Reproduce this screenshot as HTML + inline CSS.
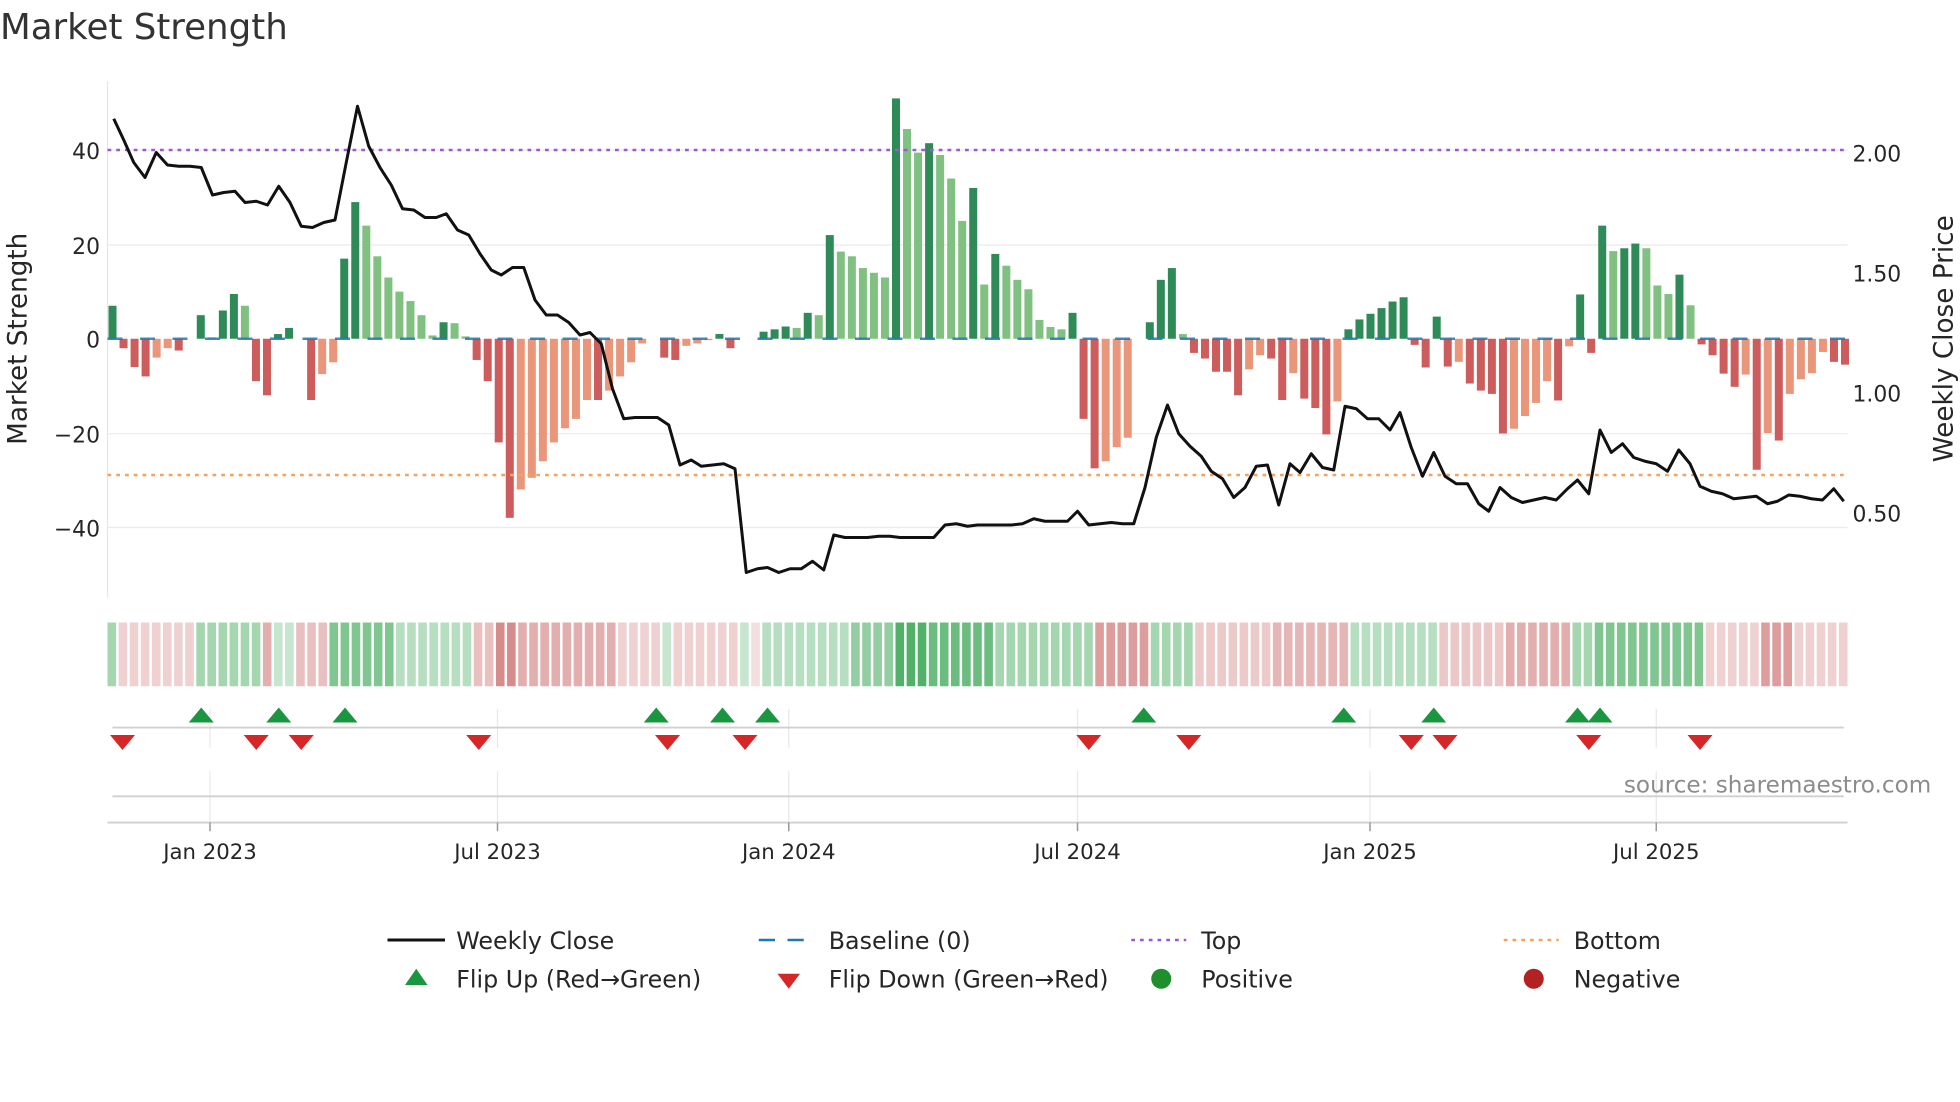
<!DOCTYPE html>
<html><head><meta charset="utf-8">
<style>
html,body{margin:0;padding:0;background:#fff;}
svg{display:block;}
text{font-family:"DejaVu Sans","Liberation Sans",sans-serif;}
</style></head>
<body>
<svg id="s" width="1960" height="1102" viewBox="0 0 1568 881.6" xmlns="http://www.w3.org/2000/svg" fill="#262626">
<rect width="1568" height="882" fill="#fff"/>
<text x="0" y="31" font-size="28.5" style="fill:#333">Market Strength</text>
<g stroke="#ebebeb" stroke-width="1">
<line x1="86" x2="1478" y1="120" y2="120"/><line x1="86" x2="1478" y1="196" y2="196"/>
<line x1="86" x2="1478" y1="347" y2="347"/><line x1="86" x2="1478" y1="422" y2="422"/>
</g>
<line x1="86" x2="86" y1="65" y2="478" stroke="#e6e6e6"/>
<g font-size="17.5" text-anchor="end">
<text x="80" y="127">40</text><text x="80" y="203">20</text><text x="80" y="278">0</text>
<text x="80" y="354">−20</text><text x="80" y="429">−40</text>
</g>
<g font-size="17.5">
<text x="1482" y="129">2.00</text><text x="1482" y="225">1.50</text>
<text x="1482" y="321">1.00</text><text x="1482" y="417">0.50</text>
</g>
<text transform="translate(21,271) rotate(-90)" font-size="21" text-anchor="middle">Market Strength</text>
<text transform="translate(1562,271) rotate(-90)" font-size="21" text-anchor="middle">Weekly Close Price</text>
<g id="bars"></g>
<line x1="86" x2="1478" y1="271" y2="271" stroke="#1f77b4" stroke-width="2" stroke-dasharray="12,14" opacity="0.85"/>
<line x1="86" x2="1478" y1="120" y2="120" stroke="#9b59d6" stroke-width="2" stroke-dasharray="3,4"/>
<line x1="86" x2="1478" y1="380" y2="380" stroke="#f4a261" stroke-width="2" stroke-dasharray="3,4"/>
<polyline id="price" fill="none" stroke="#111" stroke-width="2.4" stroke-linejoin="round"/>
<g id="strip"></g>
<g stroke="#e8e8e8" stroke-width="1" id="vg"></g>
<line x1="90" x2="1475" y1="582" y2="582" stroke="#d0d0d0" stroke-width="1.5"/>
<g id="mk"></g>
<line x1="90" x2="1475" y1="637" y2="637" stroke="#d0d0d0" stroke-width="1.5"/>
<text x="1545" y="634" font-size="18.5" text-anchor="end" style="fill:#8c8c8c">source: sharemaestro.com</text>
<line x1="86" x2="1478" y1="658" y2="658" stroke="#cfcfcf" stroke-width="1.5"/>
<g id="ticks" font-size="17" text-anchor="middle"></g>
<g font-size="19">
<line x1="310" x2="356" y1="752" y2="752" stroke="#111" stroke-width="2.4"/>
<text x="365" y="759">Weekly Close</text>
<line x1="607" x2="651" y1="752" y2="752" stroke="#1f77b4" stroke-width="2" stroke-dasharray="13,10"/>
<text x="663" y="759">Baseline (0)</text>
<line x1="905" x2="949" y1="752" y2="752" stroke="#9b59d6" stroke-width="2" stroke-dasharray="3,4"/>
<text x="961" y="759">Top</text>
<line x1="1203" x2="1247" y1="752" y2="752" stroke="#f4a261" stroke-width="2" stroke-dasharray="3,4"/>
<text x="1259" y="759">Bottom</text>
<polygon points="324,788 342,788 333,775" fill="#1a9641"/>
<text x="365" y="790">Flip Up (Red→Green)</text>
<polygon points="622,779 640,779 631,791" fill="#d62728"/>
<text x="663" y="790">Flip Down (Green→Red)</text>
<circle cx="929" cy="783" r="8" fill="#1f8f2e"/>
<text x="961" y="790">Positive</text>
<circle cx="1227" cy="783" r="8" fill="#b22222"/>
<text x="1259" y="790">Negative</text>
</g>
</svg>
<script>
var NS="http://www.w3.org/2000/svg";
function el(p,t,a){var e=document.createElementNS(NS,t);for(var k in a)e.setAttribute(k,a[k]);p.appendChild(e);return e;}
var A="7d -2d -6d -8d -4l -2l -2.5d 0d 5d 0.3l 6d 9.5d 7l -9d -12d 1d 2.3d 0d -13d -7.5l -5l 17d 29d 24l 17.5l 13l 10l 8l 5l 0.7l 3.5d 3.3l 0.5l -4.5d -9d -22d -38d -32l -29.5l -26l -22l -19l -17l -13l -13d -11l -8l -5l -1l 0d -4d -4.5d -1.5l -1l -0.3l 1d -2d 0d 0d 1.5d 2d 2.6d 2.3l 5.5d 5l 22d 18.5l 17.5l 15l 14l 13l 51d 44.5l 39.5l 41.5d 39l 34l 25l 32d 11.5l 18d 15.5l 12.5l 10.5l 4l 2.5l 2l 5.5d -17d -27.5d -26l -23l -21l 0d 3.5d 12.5d 15d 1l";
var B="-3d -4.2d -7d -7d -12d -6.5l -3.5l -4.2d -13d -7.3l -12.7d -14.7d -20.3d -13.3l 2d 4.1d 5.3d 6.5d 7.9d 8.8d -1.3d -6.1d 4.7d -5.9d -4.9l -9.5d -11d -11.7d -20.1d -19.1l -16.4l -13.6l -9l -13.1d -1.6l 9.4d -3d 24d 18.6l 19.2d 20.2d 19.2l 11.3l 9.5l 13.6d 7.1l -1.2d -3.5d -7.4d -10.2d -7.6l -27.8d -20l -21.6d -11.7l -8.6l -7.3l -2.8l -4.9d -5.5d";
var V=(A+" "+B).split(" ");
var n=V.length, x0=90, x1=1476, dx=(x1-x0)/(n-1);
var bars=document.getElementById("bars"), strip=document.getElementById("strip");
V.forEach(function(s,i){
  var v=parseFloat(s), d=s.slice(-1)=="d", x=x0+i*dx;
  var col = v>=0 ? (d?"#2e8b57":"#80c080") : (d?"#cd5c5c":"#e9967a");
  var h=Math.abs(v)*3.77, y=v>=0?271-h:271;
  if(h>0.3) el(bars,"rect",{x:x-3.2,y:y,width:6.4,height:h,fill:col});
});
var S=[[1,2],[7,-1],[6,2],[1,-2],[2,1],[3,-1.5],[6,3],[7,1.5],[2,-1.5],[2,-3],[9,-2],[4,-1],[1,1],[6,-1],[1,1],[1,-0.6],[8,1.5],[4,2.5],[3,4.3],[6,3.6],[9,2],[5,-2.5],[4,2],[7,-1.2],[7,-1.8],[8,1.5],[6,-1.3],[6,-2],[2,2],[10,3],[5,-1],[3,-2.5],[5,-1]];
function mix(c,t){return "rgb("+[0,1,2].map(function(k){return Math.round(255+(c[k]-255)*t);}).join(",")+")";}
var idx=0, tot=0; S.forEach(function(s){tot+=s[0];});
var cw=(x1-x0+8)/tot;
S.forEach(function(s){
  for(var j=0;j<s[0];j++){
    var L=s[1], c = L>=0? mix([58,166,85],Math.min(1,0.1+L/5.5)) : mix([205,110,110],Math.min(1,0.08+(-L)/4.2));
    el(strip,"rect",{x:86+idx*cw,y:498,width:cw-2,height:51,fill:c}); idx++;
  }
});
var P="91,95 99,112 107,130 116,142 125,122 134,132 143,133 152,133 161,134 170,156 179,154 188,153 196,162 205,161 214,164 223,149 232,162 241,181 250,182 259,178 268,176 277,130 286,85 295,117 304,134 313,148 322,167 331,168 340,174 349,174 357,171 366,184 375,188 384,203 393,216 401,220 410,214 419,214 428,240 437,252 446,252 455,258 464,268 472,266 481,275 490,311 499,335 508,334 517,334 526,334 535,340 544,372 553,368 561,373 570,372 579,371 588,375 597,458 606,455 614,454 623,458 632,455 641,455 650,449 659,456 667,428 676,430 685,430 694,430 703,429 712,429 720,430 729,430 738,430 747,430 756,420 765,419 774,421 782,420 791,420 800,420 809,420 818,419 827,415 836,417 845,417 854,417 862,409 871,420 880,419 889,418 898,419 907,419 916,390 925,350 934,324 943,347 952,357 961,365 969,377 978,383 987,398 996,390 1005,373 1014,372 1023,404 1032,371 1040,378 1049,363 1058,374 1067,376 1076,325 1085,327 1094,335 1103,335 1112,344 1120,330 1129,358 1138,381 1147,362 1156,381 1165,387 1174,387 1183,403 1191,409 1200,390 1209,398 1218,402 1227,400 1236,398 1245,400 1254,391 1262,384 1271,395 1280,344 1289,362 1298,355 1307,366 1316,369 1325,371 1334,377 1343,360 1352,371 1360,389 1369,393 1378,395 1387,399 1396,398 1405,397 1414,403 1422,401 1431,396 1440,397 1449,399 1458,400 1467,391 1475,401";
document.getElementById("price").setAttribute("points",P);
var T=[[168,"Jan 2023"],[398,"Jul 2023"],[631,"Jan 2024"],[862,"Jul 2024"],[1096,"Jan 2025"],[1325,"Jul 2025"]];
var vg=document.getElementById("vg"), tk=document.getElementById("ticks");
T.forEach(function(t){
  el(vg,"line",{x1:t[0],x2:t[0],y1:567,y2:598});
  el(vg,"line",{x1:t[0],x2:t[0],y1:617,y2:658});
  el(tk,"line",{x1:t[0],x2:t[0],y1:658,y2:665,stroke:"#999","stroke-width":1.2});
  var e=el(tk,"text",{x:t[0],y:687});e.textContent=t[1];
});
var mk=document.getElementById("mk");
[161,223,276,525,578,614,915,1075,1147,1262,1280].forEach(function(x){
  el(mk,"polygon",{points:(x-10)+",578 "+(x+10)+",578 "+x+",566",fill:"#1a9641"});});
[98,205,241,383,534,596,871,951,1129,1156,1271,1360].forEach(function(x){
  el(mk,"polygon",{points:(x-10)+",588 "+(x+10)+",588 "+x+",600",fill:"#d62728"});});
</script>
</body></html>
